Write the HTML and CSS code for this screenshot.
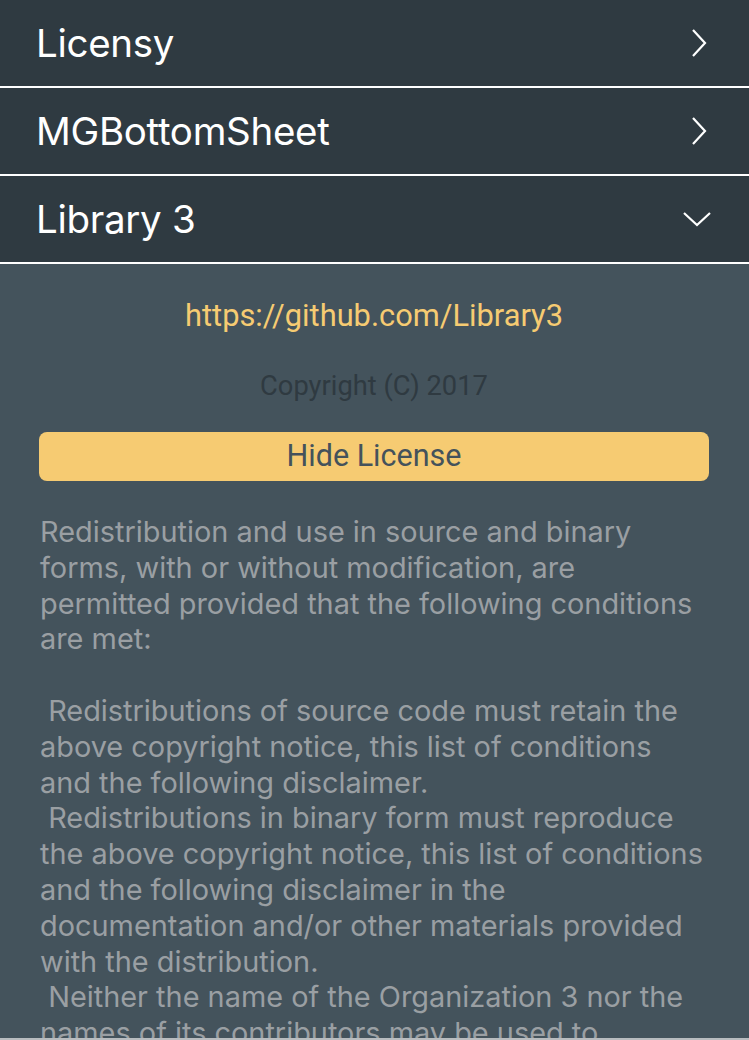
FILE: index.html
```html
<!DOCTYPE html>
<html>
<head>
<meta charset="utf-8">
<link rel="stylesheet" href="styles.css">
</head>
<body>
<div class="screen">
  <div class="list">
    <div class="row">
      <span class="row-title">Licensy</span>
      <svg class="chev" width="16" height="28" viewBox="0 0 16 28"><path d="M2 1 L14 14 L2 27" fill="none" stroke="#fff" stroke-width="2.2"/></svg>
    </div>
    <div class="row">
      <span class="row-title">MGBottomSheet</span>
      <svg class="chev" width="16" height="28" viewBox="0 0 16 28"><path d="M2 1 L14 14 L2 27" fill="none" stroke="#fff" stroke-width="2.2"/></svg>
    </div>
    <div class="row">
      <span class="row-title">Library 3</span>
      <svg class="chev-down" width="28" height="16" viewBox="0 0 28 16"><path d="M1 2 L14 14 L27 2" fill="none" stroke="#fff" stroke-width="2.2"/></svg>
    </div>
    <div class="detail">
      <div class="link">https://github.com/Library3</div>
      <div class="copyright">Copyright (C) 2017</div>
      <button class="hide-btn">Hide License</button>
      <div class="license">Redistribution and use in source and binary
forms, with or without modification, are
permitted provided that the following conditions
are met:

 Redistributions of source code must retain the
above copyright notice, this list of conditions
and the following disclaimer.
 Redistributions in binary form must reproduce
the above copyright notice, this list of conditions
and the following disclaimer in the
documentation and/or other materials provided
with the distribution.
 Neither the name of the Organization 3 nor the
names of its contributors may be used to</div>
    </div>
  </div>
  <div class="bottom-edge"></div>
</div>
</body>
</html>
```
FILE: styles.css
```css
html, body {
  margin: 0;
  padding: 0;
  background: #44535c;
}
.screen {
  width: 749px;
  height: 1040px;
  display: flex;
  flex-direction: column;
  overflow: hidden;
}
.list {
  flex: 1;
  overflow: hidden;
  display: flex;
  flex-direction: column;
}
.row {
  height: 86px;
  flex: none;
  background: #2f3a41;
  border-bottom: 2px solid #ffffff;
  display: flex;
  align-items: center;
  justify-content: space-between;
  padding: 0 38px 0 36px;
}
.row-title {
  font-family: Inter, "Liberation Sans", sans-serif;
  font-size: 38.5px;
  color: #ffffff;
  letter-spacing: -0.3px;
}
.chev {
  margin-right: 4px;
}
.chev-down {
  margin-right: 0;
}
.detail {
  background: #44535c;
  padding: 32px 40px 0 39px;
  display: flex;
  flex-direction: column;
  align-items: stretch;
}
.link {
  font-family: Roboto, "Liberation Sans", sans-serif;
  font-size: 30.8px;
  line-height: 40px;
  color: #f6cb72;
  text-align: center;
}
.copyright {
  font-family: Roboto, "Liberation Sans", sans-serif;
  font-size: 27.3px;
  line-height: 36px;
  color: #2f3a41;
  text-align: center;
  margin-top: 32px;
}
.hide-btn {
  margin-top: 28px;
  height: 49px;
  border: none;
  border-radius: 8px;
  background: #f6cb72;
  color: #44525b;
  font-family: Roboto, "Liberation Sans", sans-serif;
  font-size: 30.5px;
  padding: 0 0 2px;
}
.license {
  margin-top: 33px;
  padding-left: 1px;
  font-family: Inter, "Liberation Sans", sans-serif;
  font-size: 28.9px;
  line-height: 35.8px;
  color: #9a9fa3;
  white-space: pre;
}
.bottom-edge {
  height: 2px;
  flex: none;
  background: #b8bcbf;
}
```
